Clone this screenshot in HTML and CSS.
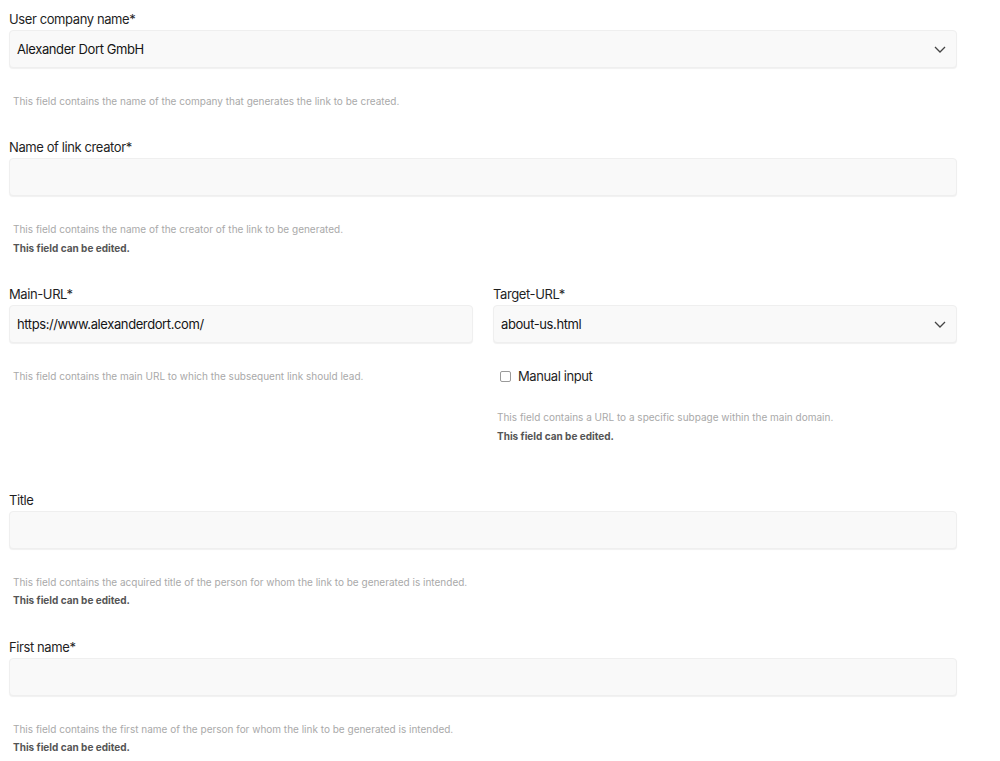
FILE: index.html
```html
<!DOCTYPE html>
<html lang="en">
<head>
<meta charset="utf-8">
<title>Link form</title>
<link rel="stylesheet" href="styles.css">
</head>
<body>
<form class="form">
  <div class="field">
    <label class="label">User company name*</label>
    <div class="input select">
      <span class="value">Alexander Dort GmbH</span>
      <svg class="chev" width="12" height="7" viewBox="0 0 12 7"><path d="M1 1l5 5 5-5" fill="none" stroke="#444" stroke-width="1.3"/></svg>
    </div>
    <div class="help">
      <p class="hint">This field contains the name of the company that generates the link to be created.</p>
    </div>
  </div>

  <div class="field">
    <label class="label">Name of link creator*</label>
    <div class="input"></div>
    <div class="help">
      <p class="hint">This field contains the name of the creator of the link to be generated.</p>
      <p class="edit">This field can be edited.</p>
    </div>
  </div>

  <div class="row">
    <div class="field col">
      <label class="label">Main-URL*</label>
      <div class="input"><span class="value">https://www.alexanderdort.com/</span></div>
      <div class="help">
        <p class="hint">This field contains the main URL to which the subsequent link should lead.</p>
      </div>
    </div>
    <div class="field col">
      <label class="label">Target-URL*</label>
      <div class="input select">
        <span class="value">about-us.html</span>
        <svg class="chev" width="12" height="7" viewBox="0 0 12 7"><path d="M1 1l5 5 5-5" fill="none" stroke="#444" stroke-width="1.3"/></svg>
      </div>
      <div class="check">
        <span class="box"></span>
        <span class="check-label">Manual input</span>
      </div>
      <div class="help help-right">
        <p class="hint">This field contains a URL to a specific subpage within the main domain.</p>
        <p class="edit">This field can be edited.</p>
      </div>
    </div>
  </div>

  <div class="field">
    <label class="label">Title</label>
    <div class="input"></div>
    <div class="help">
      <p class="hint">This field contains the acquired title of the person for whom the link to be generated is intended.</p>
      <p class="edit">This field can be edited.</p>
    </div>
  </div>

  <div class="field">
    <label class="label">First name*</label>
    <div class="input"></div>
    <div class="help">
      <p class="hint">This field contains the first name of the person for whom the link to be generated is intended.</p>
      <p class="edit">This field can be edited.</p>
    </div>
  </div>
</form>
</body>
</html>
```

FILE: styles.css
```css
* { box-sizing: border-box; }
html, body { margin: 0; padding: 0; background: #fff; }
body {
  font-family: Inter, "Noto Sans", "Liberation Sans", sans-serif;
  color: #1c1c1c;
}
.form {
  width: 948px;
  margin-left: 9px;
  padding-top: 9px;
  display: flex;
  flex-direction: column;
  gap: 26.5px;
}
.field { display: flex; flex-direction: column; }
.label {
  display: block;
  font-size: 13px;
  letter-spacing: -0.4px;
  line-height: 20px;
  height: 21px;
  color: #1f1f1f;
}
.input {
  height: 38px;
  background: #f9f9f9;
  border: 1px solid #efefef;
  border-radius: 4px;
  box-shadow: 0 1px 1px rgba(0,0,0,0.06);
  display: flex;
  align-items: center;
  padding: 0 10px 0 7px;
}
.value { font-size: 13px; letter-spacing: -0.4px; color: #151515; }
.select { justify-content: space-between; }
.help { margin-top: 25px; padding-left: 4px; }
.hint, .edit { margin: 0; font-size: 10px; }
.hint { color: #a9a9a9; line-height: 17.5px; }
.edit { color: #555; font-weight: 700; line-height: 19px; }
.row { display: flex; gap: 20px; }
.col { flex: 1; }
.check {
  display: flex;
  align-items: center;
  margin-top: 24px;
  padding-left: 7px;
  height: 18px;
}
.box {
  width: 11px;
  height: 11px;
  border: 1px solid #9a9a9a;
  border-radius: 2px;
  margin-right: 7px;
}
.check-label { font-size: 13px; letter-spacing: -0.4px; color: #1f1f1f; }
.help-right { margin-top: 24px; margin-bottom: 17.5px; }
```
